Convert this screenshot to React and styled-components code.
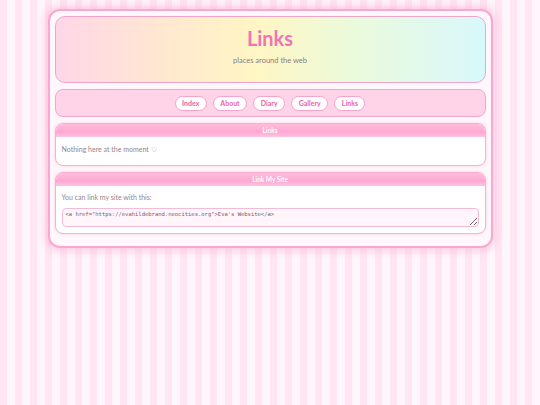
import React from "react";
import styled, { createGlobalStyle } from "styled-components";

const Global = createGlobalStyle`
  html, body { margin: 0; padding: 0; }
  body {
    min-height: 405px;
    font-family: Lato, "Noto Sans", sans-serif;
    background: repeating-linear-gradient(90deg, #ffe6f2 0px, #ffe6f2 7px, #fff6fb 7px, #fff6fb 15px);
  }
`;

const Page = styled.div`
  padding-top: 9px;
  display: flex;
  justify-content: center;
`;

const Container = styled.div`
  width: 431px;
  background: #fff7fb;
  border: 2px solid #f9a8d0;
  border-radius: 12px;
  box-shadow: 0 0 8px 3px rgba(255, 170, 210, 0.55);
  padding: 5px 5px 12px;
  display: flex;
  flex-direction: column;
  gap: 6px;
`;

const Header = styled.header`
  height: 67px;
  border: 1.5px solid #f2a4c8;
  border-radius: 10px;
  background: linear-gradient(90deg, #ffd6e8 0%, #ffe8d0 25%, #fff6c4 47%, #eafadc 70%, #d8f8fc 100%);
  display: flex;
  flex-direction: column;
  align-items: center;
  box-sizing: border-box;
  padding-top: 9px;
`;

const Title = styled.h1`
  margin: 0;
  font-size: 20px;
  line-height: 24px;
  font-weight: 700;
  color: #f472b6;
`;

const Subtitle = styled.p`
  margin: 6px 0 0;
  font-size: 7.5px;
  color: #8f8083;
`;

const Nav = styled.nav`
  height: 28px;
  box-sizing: border-box;
  background: #ffd3e8;
  border: 1.5px solid #f4a6ca;
  border-radius: 8px;
  display: flex;
  align-items: center;
  justify-content: center;
  gap: 6px;
`;

const NavButton = styled.a`
  height: 15px;
  box-sizing: border-box;
  padding: 0 6.5px;
  display: flex;
  align-items: center;
  background: #ffffff;
  border: 1.5px solid #f5a3c9;
  border-radius: 8px;
  color: #ec5fa6;
  font-size: 7px;
  font-weight: 700;
  text-decoration: none;
`;

const Box = styled.section`
  border: 1.5px solid #f7b0d2;
  border-radius: 8px;
  background: #ffffff;
  overflow: hidden;
  box-shadow: 0 0 3px rgba(255, 170, 210, 0.5);
`;

const BoxHead = styled.div`
  height: 13px;
  background: linear-gradient(180deg, #ffbcdc 0%, #ffa8d2 60%, #ffc4e2 100%);
  color: #ffffff;
  font-size: 6.5px;
  font-weight: 700;
  display: flex;
  align-items: center;
  justify-content: center;
`;

const BoxBody = styled.div`
  padding: ${(p) => p.$pad || "6px 6px 10px"};
  font-size: 7px;
  line-height: 10px;
  color: #958589;
`;

const Text = styled.p`
  margin: 0;
`;

const CodeArea = styled.textarea`
  display: block;
  width: 100%;
  box-sizing: border-box;
  height: 19px;
  margin-top: 6px;
  padding: 2px 3px;
  background: #fff5fa;
  border: 1px solid #f2bcd4;
  border-radius: 4px;
  font-family: "DejaVu Sans Mono", monospace;
  font-size: 5.5px;
  color: #7a5f6c;
  resize: vertical;
  outline: none;
`;

export default function App() {
  const links = ["Index", "About", "Diary", "Gallery", "Links"];
  return (
    <>
      <Global />
      <Page>
        <Container>
          <Header>
            <Title>Links</Title>
            <Subtitle>places around the web</Subtitle>
          </Header>
          <Nav>
            {links.map((l) => (
              <NavButton key={l} href="#">{l}</NavButton>
            ))}
          </Nav>
          <Box>
            <BoxHead>Links</BoxHead>
            <BoxBody $pad="7px 6px 11px">
              <Text>Nothing here at the moment ♡</Text>
            </BoxBody>
          </Box>
          <Box>
            <BoxHead>Link My Site</BoxHead>
            <BoxBody $pad="6px 6px 6px">
              <Text>You can link my site with this:</Text>
              <CodeArea
                readOnly
                value={'<a href="https://evahildebrand.neocities.org">Eva\'s Website</a>'}
              />
            </BoxBody>
          </Box>
        </Container>
      </Page>
    </>
  );
}
